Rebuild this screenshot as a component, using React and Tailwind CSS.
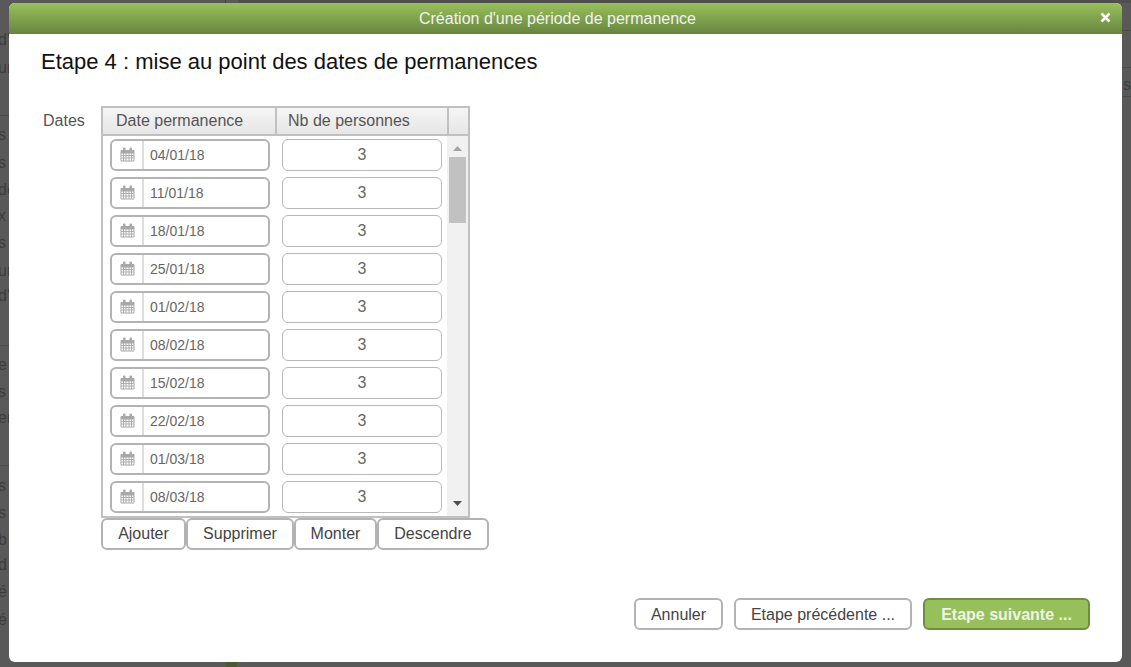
const rows = ["04/01/18","11/01/18","18/01/18","25/01/18","01/02/18","08/02/18","15/02/18","22/02/18","01/03/18","08/03/18"];
const leftBits = [["d'",32],["ur",60],["s",127],["s",155],["de",182],["x",208],["s",235],["ur",263],["d'",288],["e",357],["s",384],["er",410],["s",478],["s",505],["b",532],["d",557],["é",584],["é",612]];

function Cal() {
  return (
    <svg width="15" height="15" viewBox="0 0 15 15" className="text-[#a8a8a8]">
      <path d="M1 3.500h13v10.500h-13z" fill="none" stroke="currentColor" />
      <path d="M1 4h13v2.500h-13z" fill="currentColor" />
      <path d="M1 8.500h13M1 11h13M3.500 6v8M6 6v8M9 6v8M11.500 6v8" stroke="currentColor" fill="none" strokeWidth="0.9" />
      <rect x="3" y="0.500" width="2.500" height="4" rx="1" fill="currentColor" />
      <rect x="9.500" y="0.500" width="2.500" height="4" rx="1" fill="currentColor" />
    </svg>
  );
}

function Btn({ children, className = "" }) {
  return (
    <button className={"h-8 rounded-md border-2 border-[#b3b3b3] bg-white text-[16px] text-[#444444] flex items-center justify-center " + className}>
      {children}
    </button>
  );
}

export default function App() {
  return (
    <div className="relative h-[667px] w-[1131px] overflow-hidden bg-[#595959] font-['Liberation_Sans',Arial,sans-serif]">
      <div className="absolute left-0 top-[115px] h-px w-[9px] bg-[#4a4a4a]" />
      <div className="absolute left-0 top-[345px] h-px w-[9px] bg-[#4a4a4a]" />
      <div className="absolute left-0 top-[465px] h-px w-[9px] bg-[#4a4a4a]" />
      <div className="absolute left-[1122px] top-[30px] h-px w-[9px] bg-[#4a4a4a]" />
      <div className="absolute left-[1122px] top-[67px] h-px w-[9px] bg-[#4a4a4a]" />
      <div className="absolute left-[1122px] top-[96px] h-px w-[9px] bg-[#4a4a4a]" />
      <div className="absolute left-[225px] top-0 h-[3px] w-px bg-[#3f3f3f]" />
      <div className="absolute left-[238px] top-0 h-[3px] w-[893px] bg-[#4f4f4f]" />
      <div className="absolute left-[226px] top-[662px] h-[5px] w-[11px] bg-[#4a5a33]" />
      {leftBits.map(([t, y], i) => (
        <span key={i} className="absolute left-[-2px] text-[16px] leading-[16px] text-[#3c3c3c]" style={{ top: y }}>{t}</span>
      ))}
      <span className="absolute left-[1123px] top-[77px] text-[16px] leading-[16px] text-[#3c3c3c]">so</span>

      <div className="absolute left-[9px] top-[3px] flex h-[659px] w-[1113px] flex-col overflow-hidden rounded-md bg-white">
        <div className="relative flex h-[31px] shrink-0 items-center justify-center bg-gradient-to-b from-[#98c15d] to-[#68853f] pr-4 text-[16px] text-[#f2f2f2]">
          Création d'une période de permanence
          <svg width="11" height="11" viewBox="0 0 11 11" className="absolute right-[11px] top-[9px]">
            <path d="M1.500 1.500l8 8M9.500 1.500l-8 8" stroke="white" strokeWidth="2.500" />
          </svg>
        </div>
        <div className="flex flex-1 flex-col pl-8 pr-8">
          <h1 className="mt-[13px] h-[30px] text-[22px] leading-[30px] text-[#111111]">Etape 4 : mise au point des dates de permanences</h1>
          <div className="mt-[29px] flex items-start">
            <div className="ml-[2px] w-[58px] pt-[5px] text-[16px] leading-[20px] text-[#555555]">Dates</div>
            <div>
              <div className="flex h-[412px] w-[369px] flex-col border-2 border-[#c0c0c0]">
                <div className="flex h-[28px] shrink-0 border-b-2 border-[#c0c0c0] bg-gradient-to-b from-[#f5f5f5] to-[#e6e6e6] text-[16px] leading-[25px] text-[#555555]">
                  <div className="w-[174px] border-r-2 border-[#c0c0c0] pl-[13px]">Date permanence</div>
                  <div className="w-[172px] border-r-2 border-[#c0c0c0] pl-[11px]">Nb de personnes</div>
                </div>
                <div className="flex min-h-0 flex-1">
                  <div className="flex w-[346px] flex-col gap-[6px] pl-[7px] pt-[3px]">
                    {rows.map((d) => (
                      <div key={d} className="flex gap-3">
                        <div className="flex h-8 w-40 rounded-md border-2 border-[#b3b3b3] bg-white">
                          <div className="flex w-[32px] items-center justify-center border-r-2 border-[#dddddd] pb-[2px] pl-px"><Cal /></div>
                          <div className="pl-[6px] text-[14px] leading-[28px] text-[#666666]">{d}</div>
                        </div>
                        <div className="flex h-8 w-40 items-center justify-center rounded-md border border-[#b8b8b8] bg-white text-[16px] text-[#666666]">3</div>
                      </div>
                    ))}
                  </div>
                  <div className="flex w-[21px] flex-col items-center bg-[#f1f1f1] pr-px">
                    <svg width="9" height="6" viewBox="0 0 9 6" className="mt-[10px]"><path d="M4.500 0L9 5H0z" fill="#a3a3a3" /></svg>
                    <div className="mt-[5px] h-[66px] w-[17px] bg-[#c1c1c1]" />
                    <svg width="9" height="6" viewBox="0 0 9 6" className="mb-[9px] mt-auto"><path d="M0 0h9L4.500 5z" fill="#505050" /></svg>
                  </div>
                </div>
              </div>
              <div className="flex">
                <Btn className="w-[85px]">Ajouter</Btn>
                <Btn className="w-[108px]">Supprimer</Btn>
                <Btn className="w-[83px]">Monter</Btn>
                <Btn className="w-[112px]">Descendre</Btn>
              </div>
            </div>
          </div>
          <div className="mt-[48px] flex justify-end gap-[11px]">
            <Btn className="w-[89px] pt-[2px]">Annuler</Btn>
            <Btn className="w-[178px] pt-[2px]">Etape précédente ...</Btn>
            <button className="flex h-8 w-[167px] items-center justify-center rounded-md border-2 border-[#6f8f3f] bg-[#97c05c] pt-[2px] text-[16px] font-bold text-[#eef4e4]">Etape suivante ...</button>
          </div>
        </div>
      </div>
    </div>
  );
}
